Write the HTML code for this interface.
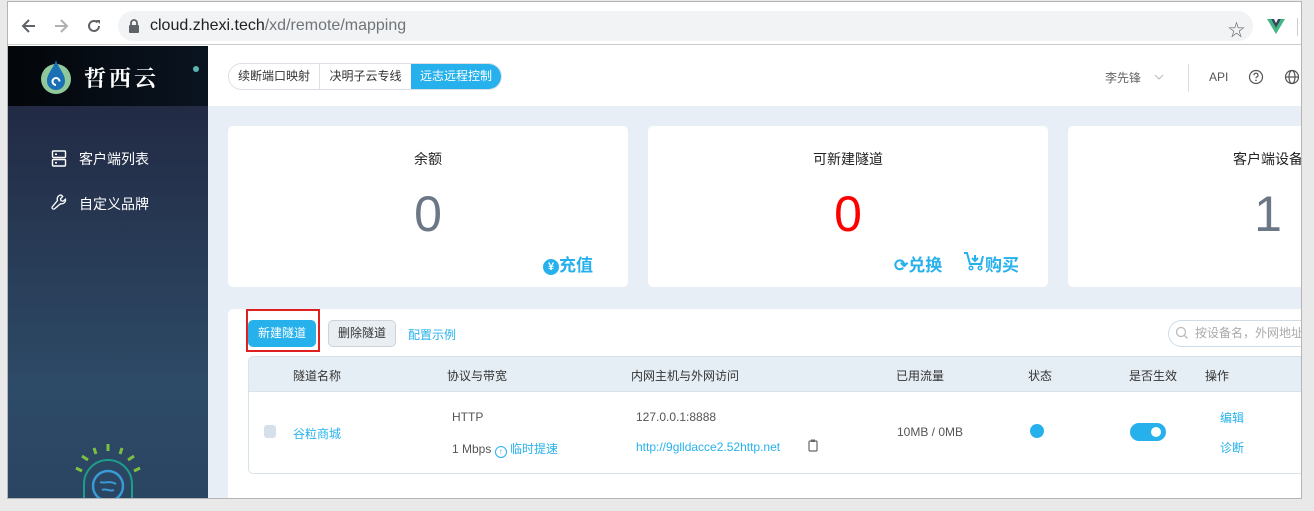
<!DOCTYPE html>
<html><head><meta charset="utf-8"><style>
*{margin:0;padding:0;box-sizing:border-box}
body{width:1314px;height:511px;background:#e9e9e9;position:relative;overflow:hidden;font-family:"Liberation Sans","Noto Sans CJK SC",sans-serif;font-size:13px;color:#333}
.abs{position:absolute}
#frame{left:7px;top:1px;width:1295px;height:498px;border:1px solid #b5b5b5;background:#fff;overflow:hidden}
.cn{font-family:"Liberation Sans","Noto Sans CJK SC",sans-serif}
</style></head><body>
<div id="frame" class="abs">
 <!-- browser toolbar -->
 <div class="abs" style="left:0;top:0;width:1295px;height:43px;background:#fff;border-bottom:1px solid #ccc"></div>
 <svg class="abs" style="left:12px;top:15px" width="18" height="18" viewBox="0 0 18 18"><path d="M15 9H4M9 3L3 9l6 6" stroke="#5f6368" stroke-width="2" fill="none"/></svg>
 <svg class="abs" style="left:44px;top:15px" width="18" height="18" viewBox="0 0 18 18"><path d="M3 9h11M9 3l6 6-6 6" stroke="#b0b0b0" stroke-width="2" fill="none"/></svg>
 <svg class="abs" style="left:77px;top:15px" width="18" height="18" viewBox="0 0 18 18"><path d="M14 9a5 5 0 1 1-1.5-3.6" stroke="#5f6368" stroke-width="2" fill="none"/><path d="M11 3h4v4z" fill="#5f6368"/></svg>
 <div class="abs" style="left:110px;top:9px;width:1135px;height:30px;border-radius:15px;background:#f1f3f4"></div>
 <svg class="abs" style="left:120px;top:17px" width="12" height="14" viewBox="0 0 12 14"><rect x="1" y="6" width="10" height="8" rx="1" fill="#5f6368"/><path d="M3 6V4a3 3 0 0 1 6 0v2" stroke="#5f6368" stroke-width="1.8" fill="none"/></svg>
 <div class="abs" style="left:142px;top:15px;font-size:16px;color:#202124">cloud.zhexi.tech<span style="color:#70757a">/xd/remote/mapping</span></div>
 <div class="abs" style="left:1220px;top:14px;font-size:17px;color:#5f6368">☆</div>
 <svg class="abs" style="left:1259px;top:17px" width="18" height="15" viewBox="0 0 18 15"><path d="M0 0h4l5 9 5-9h4L9 15z" fill="#41b883"/><path d="M4 0h3l2 4 2-4h3L9 9z" fill="#35495e"/></svg>
 <div class="abs" style="left:1289px;top:16px;width:1px;height:18px;background:#ccc"></div>

<div class="abs" style="left:0;top:-1px;width:1295px;height:500px">
 <!-- sidebar -->
 <div class="abs" style="left:0;top:45px;width:200px;height:60px;background:linear-gradient(90deg,#03060a,#0a1420)"></div>
 <div class="abs" style="left:185px;top:65px;width:6px;height:6px;border-radius:3px;background:#5ab5b5"></div>
 <svg class="abs" style="left:32px;top:57px" width="32" height="37" viewBox="0 0 32 37"><circle cx="16" cy="21" r="15" fill="#8fc89a"/><path d="M16 2C14 10 7 15 7 23a9 9 0 0 0 18 0C25 15 18 10 16 2z" fill="#1a6fb5"/><path d="M16 27a3.5 3.5 0 1 1 3.5-3.5" stroke="#fff" stroke-width="2" fill="none"/></svg>
 <div class="abs cn" style="left:76px;top:61px;font-size:22px;font-weight:bold;color:#fff;letter-spacing:3px;font-family:'Noto Serif CJK SC',serif">哲西云</div>
 <div class="abs" style="left:0;top:105px;width:200px;height:394px;background:linear-gradient(180deg,#222a44,#2d4a66 70%,#2a4562)"></div>
 <svg class="abs" style="left:43px;top:149px" width="16" height="17" viewBox="0 0 16 17"><rect x="1.5" y="1" width="13" height="6.5" rx="1" stroke="#fff" stroke-width="1.4" fill="none"/><rect x="1.5" y="9.5" width="13" height="6.5" rx="1" stroke="#fff" stroke-width="1.4" fill="none"/><rect x="4" y="3.5" width="2" height="1.5" fill="#fff"/><rect x="4" y="12" width="2" height="1.5" fill="#fff"/></svg>
 <div class="abs cn" style="left:71px;top:148px;font-size:14px;color:#fff">客户端列表</div>
 <svg class="abs" style="left:43px;top:193px" width="16" height="17" viewBox="0 0 16 17"><path d="M10 1a4 4 0 0 0-3.5 5.5L1.5 12.5a1.5 1.5 0 0 0 2.2 2.2l5.8-5a4 4 0 0 0 5-4.5l-2.5 2-2-.5-.5-2 2.2-2.2A4 4 0 0 0 10 1z" stroke="#fff" stroke-width="1.3" fill="none"/></svg>
 <div class="abs cn" style="left:71px;top:193px;font-size:14px;color:#fff">自定义品牌</div>
 <svg class="abs" style="left:52px;top:443px" width="96" height="56" viewBox="0 0 96 56"><g stroke="#7bc043" stroke-width="3"><path d="M22 12l6 4M34 4l2 6M48 0v7M62 4l-2 6M74 12l-6 4M16 24l6 3M80 24l-6 3"/></g><path d="M24 56V40a24 24 0 0 1 48 0v16" stroke="#1e9e8a" stroke-width="2" fill="none"/><circle cx="48" cy="42" r="15" stroke="#3a9ad6" stroke-width="2.5" fill="none"/><path d="M40 38c4 2 10-2 16 2M42 46c4-2 8 2 12 0" stroke="#3a9ad6" stroke-width="2" fill="none"/></svg>

 <!-- header -->
 <div class="abs" style="left:200px;top:45px;width:1095px;height:60px;background:#fff"></div>
 <div class="abs cn" style="left:220px;top:62px;width:274px;height:27px;border:1px solid #dcdfe6;border-radius:14px;overflow:hidden;display:flex;font-size:12px;line-height:25px">
  <div style="width:91px;text-align:center;border-right:1px solid #dcdfe6">续断端口映射</div>
  <div style="width:91px;text-align:center">决明子云专线</div>
  <div style="flex:1;text-align:center;background:#27b1ec;color:#fff">远志远程控制</div>
 </div>
 <div class="abs cn" style="left:1097px;top:68px;font-size:12px;color:#666">李先锋</div>
 <svg class="abs" style="left:1146px;top:73px" width="10" height="6" viewBox="0 0 10 6"><path d="M1 1l4 4 4-4" stroke="#bbb" fill="none"/></svg>
 <div class="abs" style="left:1180px;top:63px;width:1px;height:28px;background:#ddd"></div>
 <div class="abs" style="left:1201px;top:69px;font-size:12px;color:#555">API</div>
 <svg class="abs" style="left:1240px;top:68px" width="16" height="16" viewBox="0 0 16 16"><circle cx="8" cy="8" r="6.5" stroke="#555" stroke-width="1.2" fill="none"/><path d="M6 6.2a2 2 0 1 1 2.6 1.9c-.5.2-.6.5-.6 1.2" stroke="#555" stroke-width="1.2" fill="none"/><circle cx="8" cy="11.3" r=".8" fill="#555"/></svg>
 <svg class="abs" style="left:1276px;top:68px" width="16" height="16" viewBox="0 0 16 16"><circle cx="8" cy="8" r="6.5" stroke="#555" stroke-width="1.2" fill="none"/><ellipse cx="8" cy="8" rx="3" ry="6.5" stroke="#555" stroke-width="1.2" fill="none"/><path d="M1.5 8h13" stroke="#555" stroke-width="1.2"/></svg>

 <!-- content bg -->
 <div class="abs" style="left:200px;top:105px;width:1095px;height:394px;background:#e8eef5"></div>
 <!-- cards -->
 <div class="abs" style="left:220px;top:125px;width:400px;height:161px;background:#fff;border-radius:5px"></div>
 <div class="abs cn" style="left:220px;top:148px;width:400px;text-align:center;font-size:14px;color:#222">余额</div>
 <div class="abs" style="left:220px;top:184px;width:400px;text-align:center;font-size:50px;color:#6b7785;font-weight:300">0</div>
 <div class="abs cn" style="left:535px;top:250px;font-size:17px;color:#27b1ec;font-weight:bold"><span style="display:inline-block;width:16px;height:16px;border-radius:8px;background:#27b1ec;color:#fff;font-size:11px;text-align:center;line-height:16px;vertical-align:1px">¥</span>充值</div>

 <div class="abs" style="left:640px;top:125px;width:400px;height:161px;background:#fff;border-radius:5px"></div>
 <div class="abs cn" style="left:640px;top:148px;width:400px;text-align:center;font-size:14px;color:#222">可新建隧道</div>
 <div class="abs" style="left:640px;top:184px;width:400px;text-align:center;font-size:50px;color:#f00;font-weight:300">0</div>
 <div class="abs cn" style="left:886px;top:250px;font-size:17px;color:#27b1ec;font-weight:bold">⟳兑换</div>
 <svg class="abs" style="left:955px;top:250px" width="22" height="20" viewBox="0 0 22 20"><path d="M1 2h3l3 11h11l2-8" stroke="#27b1ec" stroke-width="2" fill="none"/><path d="M12 4v6M9 7l3 3 3-3" stroke="#27b1ec" stroke-width="2" fill="none"/><circle cx="8" cy="17" r="1.8" stroke="#27b1ec" stroke-width="1.5" fill="none"/><circle cx="17" cy="17" r="1.8" stroke="#27b1ec" stroke-width="1.5" fill="none"/></svg>
 <div class="abs cn" style="left:977px;top:250px;font-size:17px;color:#27b1ec;font-weight:bold">购买</div>

 <div class="abs" style="left:1060px;top:125px;width:400px;height:161px;background:#fff;border-radius:5px"></div>
 <div class="abs cn" style="left:1060px;top:148px;width:400px;text-align:center;font-size:14px;color:#222">客户端设备</div>
 <div class="abs" style="left:1060px;top:184px;width:400px;text-align:center;font-size:50px;color:#6b7785;font-weight:300">1</div>

 <!-- panel -->
 <div class="abs" style="left:220px;top:308px;width:1080px;height:200px;background:#fff;border-radius:5px"></div>
 <div class="abs" style="left:238px;top:308px;width:74px;height:43px;border:2px solid #e02020"></div>
 <div class="abs cn" style="left:240px;top:319px;width:68px;height:27px;border-radius:5px;background:#27b1ec;color:#fff;font-size:12px;text-align:center;line-height:27px">新建隧道</div>
 <div class="abs cn" style="left:320px;top:319px;width:68px;height:27px;border-radius:5px;background:#e8eef2;border:1px solid #ccd3da;color:#333;font-size:12px;text-align:center;line-height:25px">删除隧道</div>
 <div class="abs cn" style="left:400px;top:325px;font-size:12px;color:#27b1ec">配置示例</div>
 <div class="abs cn" style="left:1160px;top:319px;width:150px;height:27px;border:1px solid #cfdde8;border-radius:14px;font-size:12px;color:#aaa;line-height:25px;padding-left:26px">按设备名，外网地址</div>
 <svg class="abs" style="left:1167px;top:325px" width="14" height="14" viewBox="0 0 14 14"><circle cx="6" cy="6" r="4.5" stroke="#bbb" stroke-width="1.3" fill="none"/><path d="M9.5 9.5l3 3" stroke="#bbb" stroke-width="1.3"/></svg>

 <!-- table -->
 <div class="abs" style="left:240px;top:355px;width:1070px;height:118px;border:1px solid #d6e2ec;border-radius:5px;overflow:hidden">
  <div style="height:35px;background:#e6eef5;border-bottom:1px solid #d6e2ec"></div>
 </div>
 <div class="abs cn" style="top:366px;left:0;font-size:12px;color:#333;width:1295px">
  <span class="abs" style="left:285px">隧道名称</span><span class="abs" style="left:439px">协议与带宽</span><span class="abs" style="left:623px">内网主机与外网访问</span><span class="abs" style="left:888px">已用流量</span><span class="abs" style="left:1020px">状态</span><span class="abs" style="left:1121px">是否生效</span><span class="abs" style="left:1197px">操作</span>
 </div>
 <div class="abs" style="left:256px;top:424px;width:12px;height:13px;border-radius:3px;background:#d5e0ea"></div>
 <div class="abs cn" style="left:285px;top:424px;font-size:12px;color:#27b1ec">谷粒商城</div>
 <div class="abs" style="left:444px;top:409px;font-size:12px;color:#555">HTTP</div>
 <div class="abs cn" style="left:444px;top:439px;font-size:12px;color:#555">1 Mbps <span style="display:inline-block;width:12px;height:12px;border:1.5px solid #27b1ec;border-radius:6px;color:#27b1ec;font-size:8px;line-height:9px;text-align:center;vertical-align:-1px">↑</span> <span style="color:#27b1ec">临时提速</span></div>
 <div class="abs" style="left:628px;top:409px;font-size:12px;color:#555">127.0.0.1:8888</div>
 <div class="abs" style="left:628px;top:439px;font-size:12px;color:#27b1ec">http://9glldacce2.52http.net</div>
 <svg class="abs" style="left:800px;top:438px" width="10" height="13" viewBox="0 0 10 13"><rect x="1" y="2" width="8" height="10" rx="1" stroke="#666" stroke-width="1.2" fill="none"/><rect x="3" y="0.5" width="4" height="2.5" fill="#666"/></svg>
 <div class="abs" style="left:889px;top:424px;font-size:12px;color:#555">10MB / 0MB</div>
 <div class="abs" style="left:1022px;top:423px;width:14px;height:14px;border-radius:7px;background:#27b1ec"></div>
 <div class="abs" style="left:1122px;top:422px;width:36px;height:18px;border-radius:9px;background:#27b1ec"><div style="position:absolute;left:21px;top:4px;width:10px;height:10px;border-radius:5px;background:#fff"></div></div>
 <div class="abs cn" style="left:1212px;top:408px;font-size:12px;color:#27b1ec">编辑</div>
 <div class="abs cn" style="left:1212px;top:438px;font-size:12px;color:#27b1ec">诊断</div>
</div>
</div>
</body></html>
